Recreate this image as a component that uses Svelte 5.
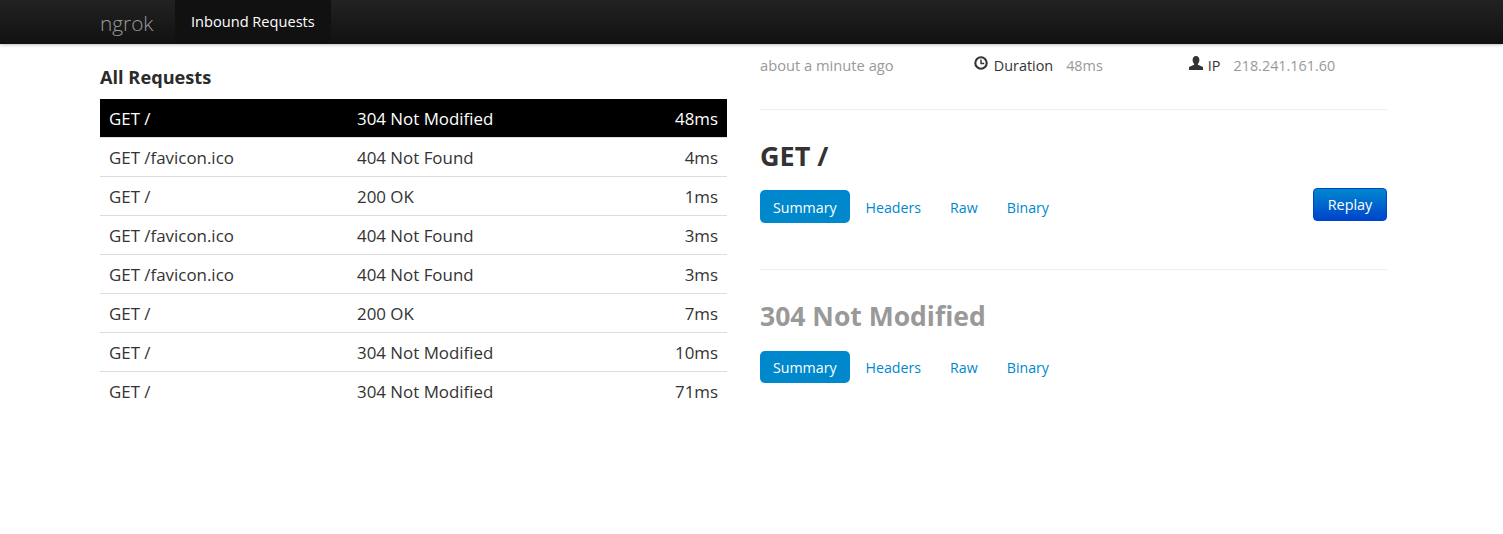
<script>
  const rows = [
    ['GET /', '304 Not Modified', '48ms'],
    ['GET /favicon.ico', '404 Not Found', '4ms'],
    ['GET /', '200 OK', '1ms'],
    ['GET /favicon.ico', '404 Not Found', '3ms'],
    ['GET /favicon.ico', '404 Not Found', '3ms'],
    ['GET /', '200 OK', '7ms'],
    ['GET /', '304 Not Modified', '10ms'],
    ['GET /', '304 Not Modified', '71ms']
  ];
  const tabs = ['Summary', 'Headers', 'Raw', 'Binary'];
</script>

<header class="nav">
  <span class="brand">ngrok</span>
  <span class="navitem">Inbound Requests</span>
</header>

<main class="page">
  <section class="left">
    <h4>All Requests</h4>
    <div class="table">
      {#each rows as r, i}
        <div class="row" class:active={i === 0}>
          <span class="path">{r[0]}</span>
          <span class="status">{r[1]}</span>
          <span class="dur">{r[2]}</span>
        </div>
      {/each}
    </div>
  </section>

  <section class="right">
    <div class="meta">
      <span class="m1 muted">about a minute ago</span>
      <span class="m2">
        <svg class="ico" viewBox="0 0 14 14" width="14" height="14"><circle cx="7" cy="7" r="5.7" fill="none" stroke="#333" stroke-width="2.1"/><path d="M7 3.6V7.5H10.2" fill="none" stroke="#333" stroke-width="1.4"/></svg>
        <span class="lbl">Duration</span><span class="muted">48ms</span>
      </span>
      <span class="m3">
        <svg class="ico user" viewBox="0 0 14 14" width="14" height="14"><path d="M7 0C9.3 0 10.4 1.8 10.4 3.9 10.4 5.6 9.6 7 8.9 7.7V8.7L14 11V14H0V11L5.1 8.7V7.7C4.4 7 3.6 5.6 3.6 3.9 3.6 1.8 4.7 0 7 0Z" fill="#333"/></svg>
        <span class="lbl">IP</span><span class="muted">218.241.161.60</span>
      </span>
    </div>
    <div class="block head">
      <h3 class="req">GET /</h3>
      <div class="tabrow">
        <div class="tabs">
          {#each tabs as t, i}<span class="tab" class:on={i === 0}>{t}</span>{/each}
        </div>
        <button class="replay">Replay</button>
      </div>
    </div>
    <div class="block">
      <h3 class="resp">304 Not Modified</h3>
      <div class="tabs second">
        {#each tabs as t, i}<span class="tab" class:on={i === 0}>{t}</span>{/each}
      </div>
    </div>
  </section>
</main>

<style>
  :global(body) {
    margin: 0;
    background: #fff;
    font-family: "Open Sans", "Noto Sans", sans-serif;
    color: #333;
  }
  .nav {
    height: 44px;
    display: flex;
    align-items: stretch;
    padding-left: 100px;
    background: linear-gradient(#222, #111);
    box-shadow: 0 1px 3px rgba(0,0,0,.25);
  }
  .brand {
    font-size: 20.8px;
    font-weight: 300;
    color: #999;
    line-height: 46px;
    width: 75px;
  }
  .navitem {
    background: #111;
    color: #fff;
    font-size: 14.6px;
    line-height: 42px;
    padding: 0 16px;
  }
  .page {
    display: flex;
    padding-left: 100px;
    width: 1287px;
  }
  .left { width: 627px; margin-right: 33px; }
  h4 { font-size: 18.2px; font-weight: 700; margin: 0; line-height: 20px; padding-top: 23px; padding-bottom: 12px; color: #2b2b2b; }
  .row {
    display: flex;
    height: 38px;
    line-height: 40px;
    padding: 0 9px;
    border-top: 1px solid #ddd;
    font-size: 16.9px;
    color: #333;
  }
  .row.active { background: #000; color: #fff; border-top: 0; }
  .path { width: 248px; }
  .status { flex: 1; }
  .dur { text-align: right; }
  .right { flex: 1; min-width: 0; }
  .meta { display: flex; height: 53px; padding-top: 12px; font-size: 14.4px; line-height: 20px; border-bottom: 1px solid #eee; }
  .muted { color: #999; }
  .m1 { width: 214px; font-size: 14.7px; line-height: 19px; }
  .m2 { width: 215px; }
  .ico { vertical-align: 1px; margin-right: 2px; }
  .user { margin-right: 1px; }
  .lbl { margin-right: 13px; }
  h3 { margin: 0; font-size: 27px; font-weight: 700; line-height: 40px; }
  .head { border-bottom: 1px solid #eee; height: 160px; padding-top: 26px; box-sizing: border-box; }
  .req { color: #333; }
  .resp { margin-top: 26px; color: #999; font-size: 26.5px; }
  .tabrow { display: flex; justify-content: space-between; margin-top: 14px; }
  .tabs { display: flex; align-items: flex-start; }
  .second { margin-top: 15px; }
  .second .tab { height: 32px; line-height: 33px; }
  .tab { font-size: 14.2px; height: 33px; line-height: 35px; padding: 0 13px; margin-right: 3px; color: #08c; border-radius: 5px; }
  .tab.on { background: #08c; color: #fff; }
  .replay {
    height: 33px; width: 74px; margin-top: -2px; border: 1px solid #04c; border-radius: 4px;
    background: linear-gradient(#08c, #04c); color: #fff; font: 14.4px "Open Sans", sans-serif; padding: 0;
  }
</style>
